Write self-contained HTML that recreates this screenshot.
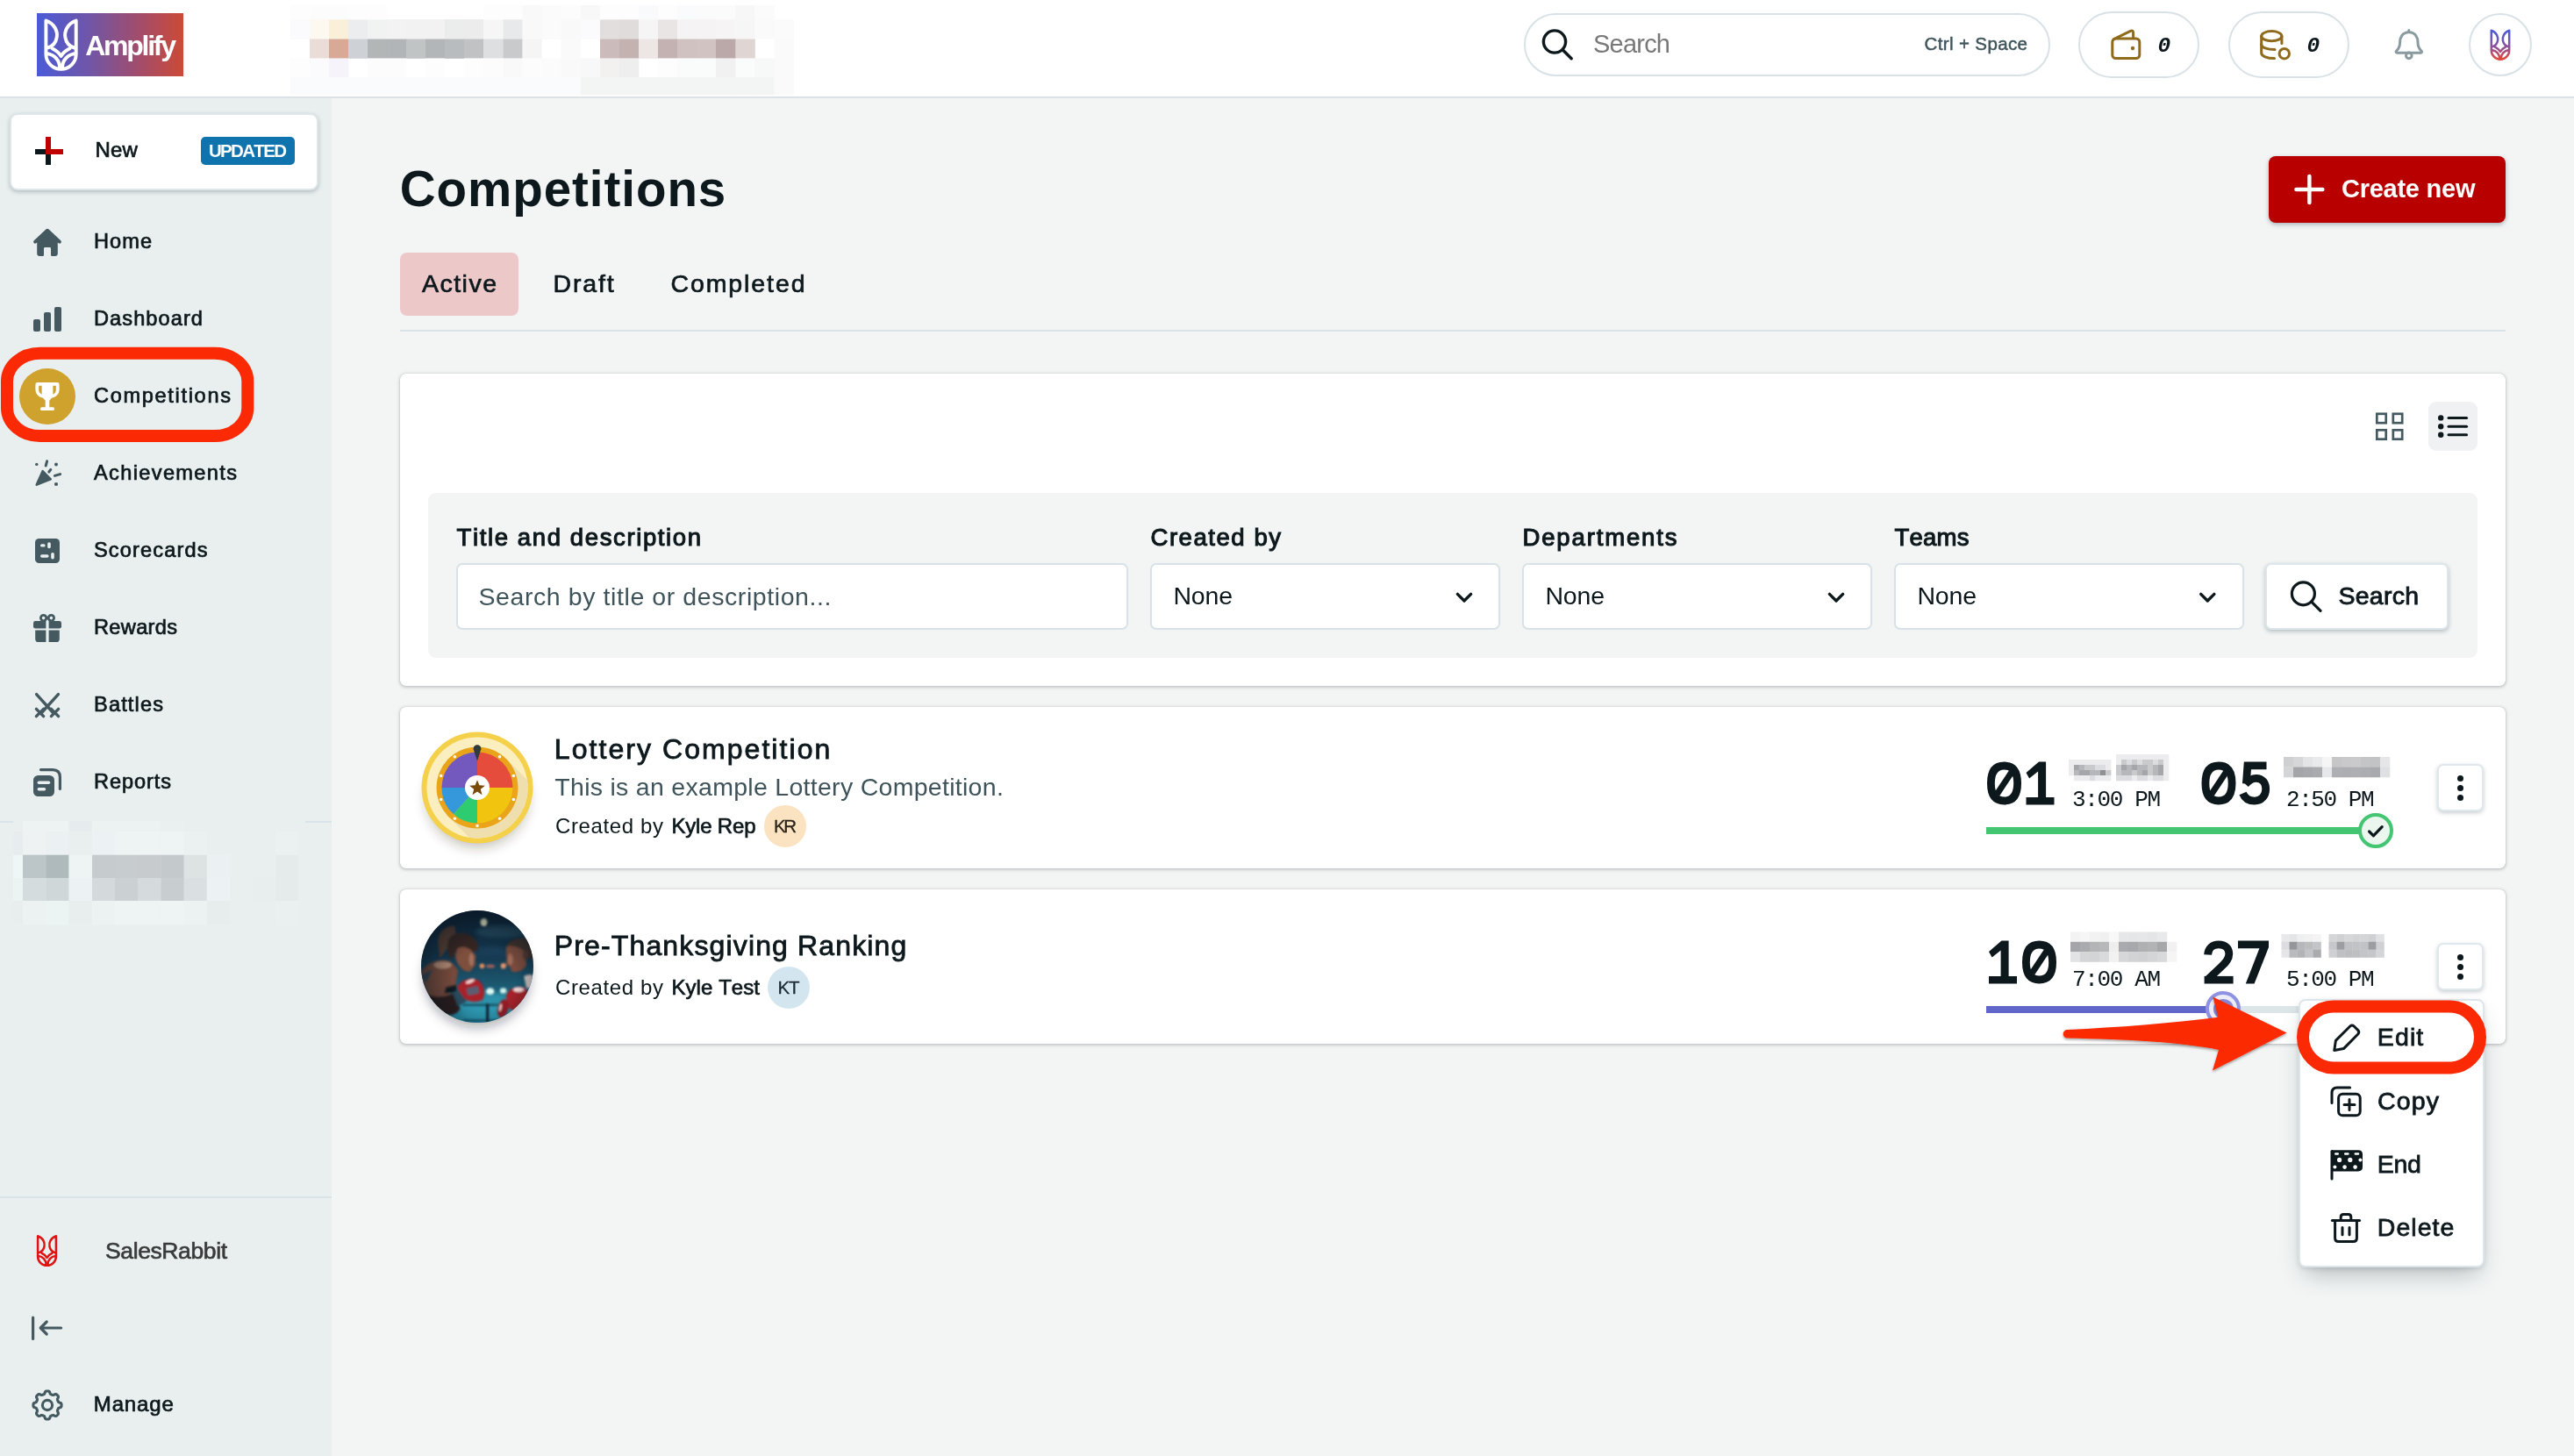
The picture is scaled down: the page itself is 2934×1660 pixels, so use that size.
<!DOCTYPE html>
<html lang="en"><head><meta charset="utf-8"><title>Competitions</title>
<style>
html,body{margin:0;padding:0}
body{width:2934px;height:1660px;background:#f3f5f5;font-family:"Liberation Sans",sans-serif;}
#app div{position:absolute;box-sizing:border-box}
#app{position:relative;width:2934px;height:1660px;overflow:hidden;background:#f3f5f5;will-change:transform}
#app span{position:absolute;white-space:pre;line-height:1;font-kerning:none}
#ov{position:absolute;left:0;top:0;pointer-events:none}
</style></head>
<body><div id="app">
<div style="left:0px;top:112px;width:378px;height:1548px;background:#e9efef;"></div>
<div style="left:0px;top:0px;width:2934px;height:112px;background:#fff;border-bottom:2px solid #dbe3e6;"></div>
<div style="left:42px;top:15px;width:167px;height:72px;background:linear-gradient(90deg,#4a5bd8 0%,#6f56a8 35%,#a04d6e 68%,#cc4a36 100%);"></div>
<div style="left:1737px;top:15px;width:600px;height:72px;background:#fff;border:2px solid #d8e2e6;border-radius:36px;"></div>
<div style="left:2369px;top:13px;width:138px;height:76px;background:#fff;border:2px solid #d8e2e6;border-radius:38px;"></div>
<div style="left:2540px;top:13px;width:138px;height:76px;background:#fff;border:2px solid #d8e2e6;border-radius:38px;"></div>
<div style="left:2814px;top:15px;width:72px;height:72px;background:#fff;border:2px solid #d8e2e6;border-radius:50%;"></div>
<div style="left:10.5px;top:128.5px;width:352px;height:88px;background:#fff;border-radius:9px;border:2px solid #dfe6e9;box-shadow:0 2px 5px rgba(40,60,70,.28);"></div>
<div style="left:229px;top:156px;width:107px;height:32px;background:#0f74ad;border-radius:5px;"></div>
<div style="left:40px;top:170px;width:32px;height:6px;background:#0d181c;"></div>
<div style="left:52px;top:156px;width:6px;height:32px;background:#0d181c;"></div>
<div style="left:52px;top:156px;width:6px;height:20px;background:#c00000;"></div>
<div style="left:52px;top:170px;width:20px;height:6px;background:#c00000;"></div>
<div style="left:22px;top:420px;width:64px;height:64px;background:#cfa22e;border-radius:50%;"></div>
<div style="left:0px;top:936px;width:378px;height:2px;background:#dae3e8;"></div>
<div style="left:0px;top:1364px;width:378px;height:2px;background:#dae3e8;"></div>
<div style="left:2586px;top:178px;width:270px;height:76px;background:#b90000;border-radius:8px;box-shadow:0 2px 5px rgba(30,50,60,.35);"></div>
<div style="left:456px;top:288px;width:135px;height:72px;background:#ecc8c8;border-radius:8px;"></div>
<div style="left:456px;top:376px;width:2400px;height:2px;background:#d9e3e7;"></div>
<div style="left:456px;top:426px;width:2400px;height:356px;background:#fff;border-radius:6.5px;box-shadow:0 1px 4px rgba(30,35,40,.30), 0 0 1px rgba(30,35,40,.25);"></div>
<div style="left:2768px;top:458px;width:56px;height:56px;background:#eff1f2;border-radius:9px;"></div>
<div style="left:488px;top:562px;width:2336px;height:188px;background:#f3f5f5;border-radius:9px;"></div>
<div style="left:520px;top:642px;width:766px;height:76px;background:#fff;border:2px solid #d8e2e6;border-radius:7px;"></div>
<div style="left:1311px;top:642px;width:399px;height:76px;background:#fff;border:2px solid #d8e2e6;border-radius:7px;"></div>
<div style="left:1735px;top:642px;width:399px;height:76px;background:#fff;border:2px solid #d8e2e6;border-radius:7px;"></div>
<div style="left:2159px;top:642px;width:399px;height:76px;background:#fff;border:2px solid #d8e2e6;border-radius:7px;"></div>
<div style="left:2582px;top:642px;width:209px;height:76px;background:#fff;border:2px solid #dde6ea;border-radius:7px;box-shadow:0 2px 5px rgba(40,60,70,.30);"></div>
<div style="left:456px;top:806px;width:2400px;height:184px;background:#fff;border-radius:6.5px;box-shadow:0 1px 4px rgba(30,35,40,.30), 0 0 1px rgba(30,35,40,.25);"></div>
<div style="left:456px;top:1014px;width:2400px;height:176px;background:#fff;border-radius:6.5px;box-shadow:0 1px 4px rgba(30,35,40,.30), 0 0 1px rgba(30,35,40,.25);"></div>
<div style="left:871px;top:918px;width:48px;height:48px;background:#fbe3c1;border-radius:50%;"></div>
<div style="left:875px;top:1102px;width:48px;height:48px;background:#d3e6f0;border-radius:50%;"></div>
<div style="left:2264px;top:943px;width:445px;height:8px;background:#43c572;"></div>
<div style="left:2688px;top:927px;width:40px;height:40px;background:#eaf6ee;border:4px solid #43c572;border-radius:50%;"></div>
<div style="left:2264px;top:1147px;width:445px;height:8px;background:#dce5e8;"></div>
<div style="left:2264px;top:1147px;width:270px;height:8px;background:#6167c9;"></div>
<div style="left:2514px;top:1130px;width:40px;height:40px;background:#ededfa;border:4px solid #8e92e2;border-radius:50%;"></div>
<div style="left:2522.5px;top:1138.5px;width:23px;height:23px;background:#8486d6;border-radius:50%;"></div>
<div style="left:2778px;top:871px;width:53px;height:54px;background:#fff;border:2px solid #dfe8ec;border-radius:7px;box-shadow:0 2px 5px rgba(40,60,70,.25);"></div>
<div style="left:2778px;top:1075px;width:53px;height:54px;background:#fff;border:2px solid #dfe8ec;border-radius:7px;box-shadow:0 2px 5px rgba(40,60,70,.25);"></div>
<div style="left:2801px;top:883.5px;width:7px;height:7px;background:#0d181c;border-radius:50%;"></div>
<div style="left:2801px;top:894.5px;width:7px;height:7px;background:#0d181c;border-radius:50%;"></div>
<div style="left:2801px;top:905.5px;width:7px;height:7px;background:#0d181c;border-radius:50%;"></div>
<div style="left:2801px;top:1087.5px;width:7px;height:7px;background:#0d181c;border-radius:50%;"></div>
<div style="left:2801px;top:1098.5px;width:7px;height:7px;background:#0d181c;border-radius:50%;"></div>
<div style="left:2801px;top:1109.5px;width:7px;height:7px;background:#0d181c;border-radius:50%;"></div>
<div style="left:2620px;top:1138.5px;width:212px;height:306px;background:#fff;border:2px solid #dce6ea;border-radius:8px;box-shadow:0 14px 26px -8px rgba(30,50,60,.32),0 2px 5px rgba(30,50,60,.12);"></div>
<span style='left:97.20px;top:35.76px;font-size:32px;font-family:"Liberation Sans", sans-serif;font-weight:700;color:#fff;letter-spacing:-2.256px;'>Amplify</span>
<span style='left:1816.00px;top:35.50px;font-size:29px;font-family:"Liberation Sans", sans-serif;font-weight:400;color:#787878;letter-spacing:-0.777px;'>Search</span>
<span style='left:2193.50px;top:40.18px;font-size:20.5px;font-family:"Liberation Sans", sans-serif;font-weight:400;color:#3f545a;letter-spacing:0.375px;-webkit-text-stroke:0.5px #3f545a;'>Ctrl + Space</span>
<span style='left:2459.50px;top:40.56px;font-size:24.5px;font-family:"Liberation Mono", monospace;font-weight:700;color:#0d181c;font-style:italic;'>0</span>
<span style='left:2629.50px;top:40.56px;font-size:24.5px;font-family:"Liberation Mono", monospace;font-weight:700;color:#0d181c;font-style:italic;'>0</span>
<span style='left:108.50px;top:158.72px;font-size:24px;font-family:"Liberation Sans", sans-serif;font-weight:400;color:#0d181c;letter-spacing:0.208px;-webkit-text-stroke:0.7px #0d181c;'>New</span>
<span style='left:238.00px;top:161.68px;font-size:20.5px;font-family:"Liberation Sans", sans-serif;font-weight:700;color:#fff;letter-spacing:-1.682px;'>UPDATED</span>
<span style='left:107.00px;top:264.06px;font-size:23.6px;font-family:"Liberation Sans", sans-serif;font-weight:400;color:#0d181c;letter-spacing:1.022px;-webkit-text-stroke:0.7px #0d181c;'>Home</span>
<span style='left:107.00px;top:352.06px;font-size:23.6px;font-family:"Liberation Sans", sans-serif;font-weight:400;color:#0d181c;letter-spacing:1.071px;-webkit-text-stroke:0.7px #0d181c;'>Dashboard</span>
<span style='left:107.00px;top:439.56px;font-size:23.6px;font-family:"Liberation Sans", sans-serif;font-weight:400;color:#0d181c;letter-spacing:1.663px;-webkit-text-stroke:0.7px #0d181c;'>Competitions</span>
<span style='left:107.00px;top:528.06px;font-size:23.6px;font-family:"Liberation Sans", sans-serif;font-weight:400;color:#0d181c;letter-spacing:1.347px;-webkit-text-stroke:0.7px #0d181c;'>Achievements</span>
<span style='left:107.00px;top:616.06px;font-size:23.6px;font-family:"Liberation Sans", sans-serif;font-weight:400;color:#0d181c;letter-spacing:1.128px;-webkit-text-stroke:0.7px #0d181c;'>Scorecards</span>
<span style='left:107.00px;top:704.06px;font-size:23.6px;font-family:"Liberation Sans", sans-serif;font-weight:400;color:#0d181c;letter-spacing:0.315px;-webkit-text-stroke:0.7px #0d181c;'>Rewards</span>
<span style='left:107.00px;top:792.06px;font-size:23.6px;font-family:"Liberation Sans", sans-serif;font-weight:400;color:#0d181c;letter-spacing:1.143px;-webkit-text-stroke:0.7px #0d181c;'>Battles</span>
<span style='left:107.00px;top:880.06px;font-size:23.6px;font-family:"Liberation Sans", sans-serif;font-weight:400;color:#0d181c;letter-spacing:0.896px;-webkit-text-stroke:0.7px #0d181c;'>Reports</span>
<span style='left:120.00px;top:1413.01px;font-size:26.5px;font-family:"Liberation Sans", sans-serif;font-weight:400;color:#3a3a3a;letter-spacing:-0.390px;-webkit-text-stroke:0.65px #3a3a3a;'>SalesRabbit</span>
<span style='left:106.80px;top:1589.22px;font-size:24px;font-family:"Liberation Sans", sans-serif;font-weight:400;color:#0d181c;letter-spacing:0.854px;-webkit-text-stroke:0.7px #0d181c;'>Manage</span>
<span style='left:455.80px;top:187.76px;font-size:56.5px;font-family:"Liberation Sans", sans-serif;font-weight:700;color:#0d181c;letter-spacing:0.958px;'>Competitions</span>
<span style='left:481.00px;top:308.92px;font-size:28.5px;font-family:"Liberation Sans", sans-serif;font-weight:400;color:#0d181c;letter-spacing:1.476px;-webkit-text-stroke:0.7px #0d181c;'>Active</span>
<span style='left:630.60px;top:308.92px;font-size:28.5px;font-family:"Liberation Sans", sans-serif;font-weight:400;color:#0d181c;letter-spacing:1.807px;-webkit-text-stroke:0.7px #0d181c;'>Draft</span>
<span style='left:764.50px;top:308.92px;font-size:28.5px;font-family:"Liberation Sans", sans-serif;font-weight:400;color:#0d181c;letter-spacing:1.897px;-webkit-text-stroke:0.7px #0d181c;'>Completed</span>
<span style='left:2669.00px;top:200.50px;font-size:29px;font-family:"Liberation Sans", sans-serif;font-weight:700;color:#fff;letter-spacing:-0.255px;'>Create new</span>
<span style='left:520.50px;top:599.26px;font-size:27.5px;font-family:"Liberation Sans", sans-serif;font-weight:400;color:#0d181c;letter-spacing:1.620px;-webkit-text-stroke:1.1px #0d181c;'>Title and description</span>
<span style='left:1311.50px;top:599.26px;font-size:27.5px;font-family:"Liberation Sans", sans-serif;font-weight:400;color:#0d181c;letter-spacing:1.552px;-webkit-text-stroke:1.1px #0d181c;'>Created by</span>
<span style='left:1735.50px;top:599.26px;font-size:27.5px;font-family:"Liberation Sans", sans-serif;font-weight:400;color:#0d181c;letter-spacing:1.856px;-webkit-text-stroke:1.1px #0d181c;'>Departments</span>
<span style='left:2159.50px;top:599.26px;font-size:27.5px;font-family:"Liberation Sans", sans-serif;font-weight:400;color:#0d181c;letter-spacing:0.238px;-webkit-text-stroke:1.1px #0d181c;'>Teams</span>
<span style='left:545.50px;top:665.92px;font-size:28.5px;font-family:"Liberation Sans", sans-serif;font-weight:400;color:#3f545a;letter-spacing:0.582px;'>Search by title or description...</span>
<span style='left:1337.50px;top:665.42px;font-size:28.5px;font-family:"Liberation Sans", sans-serif;font-weight:400;color:#0d181c;letter-spacing:-0.212px;'>None</span>
<span style='left:1761.50px;top:665.42px;font-size:28.5px;font-family:"Liberation Sans", sans-serif;font-weight:400;color:#0d181c;letter-spacing:-0.212px;'>None</span>
<span style='left:2185.50px;top:665.42px;font-size:28.5px;font-family:"Liberation Sans", sans-serif;font-weight:400;color:#0d181c;letter-spacing:-0.212px;'>None</span>
<span style='left:2665.50px;top:664.92px;font-size:28.5px;font-family:"Liberation Sans", sans-serif;font-weight:400;color:#0d181c;letter-spacing:0.238px;-webkit-text-stroke:0.9px #0d181c;'>Search</span>
<span style='left:631.80px;top:837.96px;font-size:32px;font-family:"Liberation Sans", sans-serif;font-weight:400;color:#0d181c;letter-spacing:2.058px;-webkit-text-stroke:0.85px #0d181c;'>Lottery Competition</span>
<span style='left:632.30px;top:883.42px;font-size:28.5px;font-family:"Liberation Sans", sans-serif;font-weight:400;color:#3f545a;letter-spacing:0.288px;'>This is an example Lottery Competition.</span>
<span style='left:633.00px;top:929.72px;font-size:24px;font-family:"Liberation Sans", sans-serif;font-weight:400;color:#0d181c;letter-spacing:0.622px;'>Created by</span>
<span style='left:765.50px;top:929.72px;font-size:24px;font-family:"Liberation Sans", sans-serif;font-weight:400;color:#0d181c;letter-spacing:-0.198px;-webkit-text-stroke:0.7px #0d181c;'>Kyle Rep</span>
<span style='left:882.00px;top:932.18px;font-size:20.5px;font-family:"Liberation Sans", sans-serif;font-weight:400;color:#2a2418;letter-spacing:-2.481px;-webkit-text-stroke:0.3px #2a2418;'>KR</span>
<span style='left:631.80px;top:1061.96px;font-size:32px;font-family:"Liberation Sans", sans-serif;font-weight:400;color:#0d181c;letter-spacing:1.139px;-webkit-text-stroke:0.85px #0d181c;'>Pre-Thanksgiving Ranking</span>
<span style='left:633.00px;top:1113.72px;font-size:24px;font-family:"Liberation Sans", sans-serif;font-weight:400;color:#0d181c;letter-spacing:0.622px;'>Created by</span>
<span style='left:765.50px;top:1113.72px;font-size:24px;font-family:"Liberation Sans", sans-serif;font-weight:400;color:#0d181c;letter-spacing:0.058px;-webkit-text-stroke:0.7px #0d181c;'>Kyle Test</span>
<span style='left:886.50px;top:1116.18px;font-size:20.5px;font-family:"Liberation Sans", sans-serif;font-weight:400;color:#1c2a32;letter-spacing:-1.206px;-webkit-text-stroke:0.3px #1c2a32;'>KT</span>
<span style='left:2362.00px;top:899.11px;font-size:26px;font-family:"Liberation Mono", monospace;font-weight:400;color:#0d181c;letter-spacing:-1.369px;'>3:00 PM</span>
<span style='left:2606.00px;top:899.11px;font-size:26px;font-family:"Liberation Mono", monospace;font-weight:400;color:#0d181c;letter-spacing:-1.453px;'>2:50 PM</span>
<span style='left:2362.00px;top:1103.61px;font-size:26px;font-family:"Liberation Mono", monospace;font-weight:400;color:#0d181c;letter-spacing:-1.369px;'>7:00 AM</span>
<span style='left:2606.00px;top:1103.61px;font-size:26px;font-family:"Liberation Mono", monospace;font-weight:400;color:#0d181c;letter-spacing:-1.453px;'>5:00 PM</span>
<span style='left:2709.80px;top:1168.42px;font-size:28.5px;font-family:"Liberation Sans", sans-serif;font-weight:400;color:#0d181c;letter-spacing:1.123px;-webkit-text-stroke:0.8px #0d181c;'>Edit</span>
<span style='left:2710.00px;top:1240.92px;font-size:28.5px;font-family:"Liberation Sans", sans-serif;font-weight:400;color:#0d181c;letter-spacing:1.151px;-webkit-text-stroke:0.8px #0d181c;'>Copy</span>
<span style='left:2709.80px;top:1312.92px;font-size:28.5px;font-family:"Liberation Sans", sans-serif;font-weight:400;color:#0d181c;letter-spacing:-0.357px;-webkit-text-stroke:0.8px #0d181c;'>End</span>
<span style='left:2709.80px;top:1384.92px;font-size:28.5px;font-family:"Liberation Sans", sans-serif;font-weight:400;color:#0d181c;letter-spacing:1.023px;-webkit-text-stroke:0.8px #0d181c;'>Delete</span>
<svg id="ov" width="2934" height="1660" viewBox="0 0 2934 1660">
<defs><linearGradient id="lg1" x1="0" y1="0" x2="0" y2="1"><stop offset="0" stop-color="#4a5bd8"/><stop offset=".55" stop-color="#8a52a0"/><stop offset="1" stop-color="#e2483a"/></linearGradient></defs>
<path d="M52.40 23.60 L52.40 61.74 A17.15 17.15 0 0 0 86.70 61.74 L86.70 23.60 M52.40 23.60 C62.55 26.76 66.05 36.57 64.65 42.84 C63.62 49.15 59.05 53.34 53.43 54.98 M86.70 23.60 C76.55 26.76 73.05 36.57 74.45 42.84 C75.48 49.15 80.05 53.34 85.67 54.98 M53.43 60.82 C62.35 62.36 68.35 69.22 67.90 77.11 M85.67 60.82 C76.75 62.36 70.75 69.22 71.20 77.11 M59.60 55.33 C63.96 57.56 67.46 60.64 69.55 64.07 C71.64 60.64 75.14 57.56 79.50 55.33" fill="none" stroke="#fff" stroke-width="3.9" stroke-linecap="round" stroke-linejoin="round"/>
<path d="M2839.80 34.80 L2839.80 57.48 A10.20 10.20 0 0 0 2860.20 57.48 L2860.20 34.80 M2839.80 34.80 C2845.84 36.68 2847.92 42.51 2847.08 46.24 C2846.47 50.00 2843.76 52.49 2840.41 53.47 M2860.20 34.80 C2854.16 36.68 2852.08 42.51 2852.92 46.24 C2853.53 50.00 2856.24 52.49 2859.59 53.47 M2840.41 56.93 C2845.72 57.85 2849.29 61.93 2849.02 66.62 M2859.59 56.93 C2854.28 57.85 2850.71 61.93 2850.98 66.62 M2844.08 53.67 C2846.67 55.00 2848.76 56.83 2850.00 58.87 C2851.24 56.83 2853.33 55.00 2855.92 53.67" fill="none" stroke="url(#lg1)" stroke-width="2.5" stroke-linecap="round" stroke-linejoin="round"/>
<path d="M43.10 1409.30 L43.10 1432.43 A10.40 10.40 0 0 0 63.90 1432.43 L63.90 1409.30 M43.10 1409.30 C49.26 1411.21 51.38 1417.16 50.53 1420.97 C49.90 1424.80 47.14 1427.33 43.72 1428.33 M63.90 1409.30 C57.74 1411.21 55.62 1417.16 56.47 1420.97 C57.10 1424.80 59.86 1427.33 63.28 1428.33 M43.72 1431.87 C49.13 1432.80 52.77 1436.96 52.50 1441.75 M63.28 1431.87 C57.87 1432.80 54.23 1436.96 54.50 1441.75 M47.47 1428.54 C50.11 1429.89 52.23 1431.76 53.50 1433.84 C54.77 1431.76 56.89 1429.89 59.53 1428.54" fill="none" stroke="#e01313" stroke-width="2.5" stroke-linecap="round" stroke-linejoin="round"/>
<g fill="none" stroke="#0d181c" stroke-width="3.4" stroke-linecap="round"><circle cx="1772" cy="47.5" r="12.6"/><path d="M1781.2 56.8 L1791.2 66.8"/></g>
<g fill="none" stroke="#8f6a1c" stroke-width="3" stroke-linejoin="round" stroke-linecap="round"><rect x="2407.8" y="44" width="31" height="22.5" rx="4"/><path d="M2409.5 44.6 L2428.5 35.4 Q2431.6 34.2 2431.6 37.4 V43.5"/></g><circle cx="2431" cy="55" r="2.2" fill="#8f6a1c"/>
<g fill="none" stroke="#8f6a1c" stroke-width="3" stroke-linecap="round"><ellipse cx="2589.3" cy="41.2" rx="11.6" ry="5.6"/><path d="M2577.7 41.2 V60.5 C2577.7 64 2584 66.6 2592.5 66.6"/><path d="M2577.7 50.8 C2577.7 54 2584 56.6 2593 56.6"/><path d="M2600.9 41.2 V49.5"/><circle cx="2603.8" cy="61.2" r="5.7"/></g>
<g fill="none" stroke="#8a9b9f" stroke-width="3" stroke-linecap="round" stroke-linejoin="round"><path d="M2745.8 34.6 V36.6 M2745.8 36.8 C2738 36.8 2735.6 43.4 2735.6 48.2 C2735.6 53 2733.4 56.4 2731.6 58 C2730.6 59 2731 60.2 2732.6 60.2 H2759 C2760.6 60.2 2761 59 2760 58 C2758.2 56.4 2756 53 2756 48.2 C2756 43.4 2753.6 36.8 2745.8 36.8 Z"/><circle cx="2745.8" cy="63.4" r="3.3"/></g>
<path fill="#455a60" d="M52.6 261.3 Q54 260 55.4 261.3 L69.3 274.3 Q70.6 275.8 69.4 277.1 Q68.2 278.2 66.8 277.2 L65.8 276.4 V289 Q65.8 292 62.8 292 H59.2 Q58 292 58 290.8 V283.4 Q58 282 56.6 282 H51.4 Q50 282 50 283.4 V290.8 Q50 292 48.8 292 H45.2 Q42.2 292 42.2 289 V276.4 L41.2 277.2 Q39.8 278.2 38.6 277.1 Q37.4 275.8 38.7 274.3 Z"/>
<g fill="#455a60"><rect x="38" y="364" width="8" height="14" rx="2"/><rect x="50" y="356" width="8" height="22" rx="2"/><rect x="62" y="350" width="8" height="28" rx="2"/></g>
<g fill="#fff"><path d="M40.4 438.4 Q40.4 436 42.8 436 H65.2 Q67.6 436 67.6 438.4 V444 C67.6 450 63 453 59 453.7 C57.6 455.4 56.6 456.2 56.2 456.8 H51.8 C51.4 456.2 50.4 455.4 49 453.7 C45 453 40.4 450 40.4 444 Z"/><rect x="51.7" y="455" width="4.6" height="10.4"/><rect x="46" y="464.2" width="16" height="3.9" rx="1.7"/></g><g fill="#cfa22e"><path d="M44.2 439.8 H47.6 V449.7 C45.6 448.8 44.2 447 44.2 444.6 Z"/><path d="M60.4 439.8 H63.8 V444.6 C63.8 447 62.4 448.8 60.4 449.7 Z"/></g>
<path fill="#455a60" d="M47.6 536.6 Q48.6 535.2 49.8 536.4 L58.6 545.4 Q59.8 546.8 58.2 547.6 L42.4 553.8 Q39.8 554.6 40.6 552 Z"/><g stroke="#455a60" stroke-width="3" stroke-linecap="round"><path d="M53.6 525.8 L52.2 531"/><path d="M57.8 535.4 L55.8 538"/><path d="M68.6 540.6 L62.4 542.4"/></g><g fill="#455a60"><circle cx="41.8" cy="529.4" r="1.7"/><circle cx="64" cy="529.6" r="2"/><circle cx="64" cy="552" r="2.1"/></g>
<rect x="40" y="614" width="28" height="28" rx="4.5" fill="#455a60"/><g fill="#e9efef"><rect x="46" y="620.2" width="5.6" height="3.4" rx="1.7"/><rect x="54.2" y="618.2" width="3.6" height="7" rx="1.8"/><rect x="46" y="632.2" width="9.6" height="3.6" rx="1.8"/><rect x="58.2" y="630" width="3.6" height="7.6" rx="1.8"/></g>
<g fill="#455a60"><rect x="38" y="708" width="32" height="8.6" rx="2.4"/><path d="M40.2 718.6 H67.8 V728.4 Q67.8 732 64.2 732 H43.8 Q40.2 732 40.2 728.4 Z"/></g><rect x="52.4" y="708" width="3.2" height="24" fill="#e9efef"/><g fill="none" stroke="#455a60" stroke-width="2.8"><circle cx="49.6" cy="704.6" r="3.2"/><circle cx="58.4" cy="704.6" r="3.2"/></g>
<g stroke="#455a60" stroke-width="3.4" stroke-linecap="round" fill="none"><path d="M41.6 791.6 L60.5 812.5"/><path d="M66.4 791.6 L47.5 812.5"/><path d="M41.4 808.4 L49.6 816.6 M49.6 808.4 L41.4 816.6"/><path d="M58.4 808.4 L66.6 816.6 M66.6 808.4 L58.4 816.6"/></g>
<rect x="38" y="884" width="24" height="24" rx="5.5" fill="#455a60"/><g fill="#e9efef"><rect x="42.6" y="890.6" width="14.6" height="3.4" rx="1.7"/><rect x="42.6" y="898" width="9.6" height="3.4" rx="1.7"/></g><path d="M46.5 877.6 H60 Q68.4 877.6 68.4 886 V899.5" fill="none" stroke="#455a60" stroke-width="3.2" stroke-linecap="round"/>
<g stroke="#455a60" stroke-width="3.2" stroke-linecap="round" stroke-linejoin="round" fill="none"><path d="M37.6 1502 V1526.4"/><path d="M69.6 1514 H46.4 M53.2 1507 L46.2 1514 L53.2 1521"/></g>
<path d="M54.00 1585.94 L54.53 1585.95 L55.05 1586.00 L55.56 1586.11 L56.06 1586.35 L56.50 1586.88 L56.83 1587.78 L57.11 1588.68 L57.42 1589.23 L57.78 1589.52 L58.17 1589.72 L58.56 1589.88 L58.95 1590.05 L59.34 1590.21 L59.74 1590.37 L60.15 1590.50 L60.61 1590.55 L61.22 1590.39 L62.06 1589.94 L62.93 1589.54 L63.61 1589.48 L64.13 1589.66 L64.57 1589.95 L64.98 1590.28 L65.36 1590.64 L65.72 1591.02 L66.05 1591.43 L66.34 1591.87 L66.52 1592.39 L66.46 1593.07 L66.06 1593.94 L65.61 1594.78 L65.45 1595.39 L65.50 1595.85 L65.63 1596.26 L65.79 1596.66 L65.95 1597.05 L66.12 1597.44 L66.28 1597.83 L66.48 1598.22 L66.77 1598.58 L67.32 1598.89 L68.22 1599.17 L69.12 1599.50 L69.65 1599.94 L69.89 1600.44 L70.00 1600.95 L70.05 1601.47 L70.06 1602.00 L70.05 1602.53 L70.00 1603.05 L69.89 1603.56 L69.65 1604.06 L69.12 1604.50 L68.22 1604.83 L67.32 1605.11 L66.77 1605.42 L66.48 1605.78 L66.28 1606.17 L66.12 1606.56 L65.95 1606.95 L65.79 1607.34 L65.63 1607.74 L65.50 1608.15 L65.45 1608.61 L65.61 1609.22 L66.06 1610.06 L66.46 1610.93 L66.52 1611.61 L66.34 1612.13 L66.05 1612.57 L65.72 1612.98 L65.36 1613.36 L64.98 1613.72 L64.57 1614.05 L64.13 1614.34 L63.61 1614.52 L62.93 1614.46 L62.06 1614.06 L61.22 1613.61 L60.61 1613.45 L60.15 1613.50 L59.74 1613.63 L59.34 1613.79 L58.95 1613.95 L58.56 1614.12 L58.17 1614.28 L57.78 1614.48 L57.42 1614.77 L57.11 1615.32 L56.83 1616.22 L56.50 1617.12 L56.06 1617.65 L55.56 1617.89 L55.05 1618.00 L54.53 1618.05 L54.00 1618.06 L53.47 1618.05 L52.95 1618.00 L52.44 1617.89 L51.94 1617.65 L51.50 1617.12 L51.17 1616.22 L50.89 1615.32 L50.58 1614.77 L50.22 1614.48 L49.83 1614.28 L49.44 1614.12 L49.05 1613.95 L48.66 1613.79 L48.26 1613.63 L47.85 1613.50 L47.39 1613.45 L46.78 1613.61 L45.94 1614.06 L45.07 1614.46 L44.39 1614.52 L43.87 1614.34 L43.43 1614.05 L43.02 1613.72 L42.64 1613.36 L42.28 1612.98 L41.95 1612.57 L41.66 1612.13 L41.48 1611.61 L41.54 1610.93 L41.94 1610.06 L42.39 1609.22 L42.55 1608.61 L42.50 1608.15 L42.37 1607.74 L42.21 1607.34 L42.05 1606.95 L41.88 1606.56 L41.72 1606.17 L41.52 1605.78 L41.23 1605.42 L40.68 1605.11 L39.78 1604.83 L38.88 1604.50 L38.35 1604.06 L38.11 1603.56 L38.00 1603.05 L37.95 1602.53 L37.94 1602.00 L37.95 1601.47 L38.00 1600.95 L38.11 1600.44 L38.35 1599.94 L38.88 1599.50 L39.78 1599.17 L40.68 1598.89 L41.23 1598.58 L41.52 1598.22 L41.72 1597.83 L41.88 1597.44 L42.05 1597.05 L42.21 1596.66 L42.37 1596.26 L42.50 1595.85 L42.55 1595.39 L42.39 1594.78 L41.94 1593.94 L41.54 1593.07 L41.48 1592.39 L41.66 1591.87 L41.95 1591.43 L42.28 1591.02 L42.64 1590.64 L43.02 1590.28 L43.43 1589.95 L43.87 1589.66 L44.39 1589.48 L45.07 1589.54 L45.94 1589.94 L46.78 1590.39 L47.39 1590.55 L47.85 1590.50 L48.26 1590.37 L48.66 1590.21 L49.05 1590.05 L49.44 1589.88 L49.83 1589.72 L50.22 1589.52 L50.58 1589.23 L50.89 1588.68 L51.17 1587.78 L51.50 1586.88 L51.94 1586.35 L52.44 1586.11 L52.95 1586.00 L53.47 1585.95 Z" fill="none" stroke="#455a60" stroke-width="3.1" stroke-linejoin="round"/><circle cx="54" cy="1602" r="5.6" fill="none" stroke="#455a60" stroke-width="3.1"/>
<path d="M2617.4 216 H2647.4 M2632.4 201 V231" stroke="#fff" stroke-width="4.4" stroke-linecap="round"/>
<g fill="none" stroke="#455a60" stroke-width="2.7"><rect x="2709.3" y="471.8" width="10.4" height="10.4"/><rect x="2709.3" y="490.3" width="10.4" height="10.4"/><rect x="2727.8" y="471.8" width="10.4" height="10.4"/><rect x="2727.8" y="490.3" width="10.4" height="10.4"/></g>
<circle cx="2782.2" cy="476.4" r="3.2" fill="#0d181c"/><path d="M2791 476.4 H2811.6" stroke="#0d181c" stroke-width="3" stroke-linecap="round"/><circle cx="2782.2" cy="486.2" r="3.2" fill="#0d181c"/><path d="M2791 486.2 H2811.6" stroke="#0d181c" stroke-width="3" stroke-linecap="round"/><circle cx="2782.2" cy="495.8" r="3.2" fill="#0d181c"/><path d="M2791 495.8 H2811.6" stroke="#0d181c" stroke-width="3" stroke-linecap="round"/>
<path d="M1661.4 677.4 L1669 685 L1676.6 677.4" fill="none" stroke="#0d181c" stroke-width="3.4" stroke-linecap="round" stroke-linejoin="round"/>
<path d="M2085.4 677.4 L2093 685 L2100.6 677.4" fill="none" stroke="#0d181c" stroke-width="3.4" stroke-linecap="round" stroke-linejoin="round"/>
<path d="M2508.7000000000003 677.4 L2516.3 685 L2523.9 677.4" fill="none" stroke="#0d181c" stroke-width="3.4" stroke-linecap="round" stroke-linejoin="round"/>
<g fill="none" stroke="#0d181c" stroke-width="3.2" stroke-linecap="round"><circle cx="2625.4" cy="676.8" r="13"/><path d="M2635 686.4 L2645 696.4"/></g>
<path d="M2700.6 948 L2705.4 952.8 L2715.2 942.6" fill="none" stroke="#0d181c" stroke-width="3.2" stroke-linecap="round" stroke-linejoin="round"/>
<path d="M2660.8 1197.4 L2662.4 1186.4 L2678.8 1170 Q2681 1168 2683.2 1170 L2687.8 1174.6 Q2689.8 1176.8 2687.8 1179 L2671.4 1195.6 Z" fill="none" stroke="#0d181c" stroke-width="3" stroke-linejoin="round"/>
<g fill="none" stroke="#0d181c" stroke-width="3" stroke-linecap="round" stroke-linejoin="round"><rect x="2665.6" y="1247.2" width="24.6" height="24.6" rx="4.6"/><path d="M2672 1259.5 H2684 M2678 1253.5 V1265.5"/><path d="M2658 1257.4 V1246 Q2658 1240 2664 1240 H2678.6"/></g>
<path d="M2658 1312.4 V1344" stroke="#0d181c" stroke-width="3" stroke-linecap="round"/><path d="M2658 1311.2 H2688 Q2693 1311.2 2693 1316 V1330.6 Q2693 1335.4 2688 1335.4 H2658 Z" fill="#0d181c"/><g fill="#fff"><circle cx="2666.6" cy="1322.4" r="2.6"/><circle cx="2678.8" cy="1322.4" r="2.6"/><circle cx="2690.4" cy="1322.4" r="2"/><circle cx="2661.4" cy="1330.6" r="2"/><circle cx="2672.6" cy="1330.6" r="2.3"/><circle cx="2684.6" cy="1330.6" r="2.3"/><rect x="2661" y="1314.2" width="5" height="2.6" rx="1.2"/><rect x="2672" y="1314.2" width="5.6" height="2.6" rx="1.2"/><rect x="2683.6" y="1314.2" width="5.6" height="2.6" rx="1.2"/></g>
<g fill="none" stroke="#0d181c" stroke-width="3" stroke-linecap="round" stroke-linejoin="round"><path d="M2658.4 1391.6 H2689.6"/><path d="M2668.2 1391 V1387.6 Q2668.2 1384.6 2671.2 1384.6 H2676.8 Q2679.8 1384.6 2679.8 1387.6 V1391"/><path d="M2661.6 1392 V1411.6 Q2661.6 1415.6 2665.6 1415.6 H2682.4 Q2686.4 1415.6 2686.4 1411.6 V1392"/><path d="M2670 1399.4 V1407.8 M2678 1399.4 V1407.8"/></g>
<rect x="8" y="402.7" width="274.3" height="94.4" rx="37.5" ry="32" fill="none" stroke="#fc2905" stroke-width="14"/>
<defs><filter id="ash" x="-10%" y="-20%" width="120%" height="150%"><feDropShadow dx="0" dy="1.6" stdDeviation="1.4" flood-color="#000" flood-opacity=".38"/></filter></defs>
<path filter="url(#ash)" d="M2356.5 1174 C2415 1171.5 2475 1166.5 2528.5 1159.8 L2522.3 1136.6 L2606.5 1177.5 L2522 1220.5 L2529 1197 C2490 1188.5 2422 1185 2356.5 1183.6 A4.8 4.8 0 0 1 2356.5 1174 Z" fill="#fc2905"/>
<rect x="2625" y="1147.5" width="202" height="70" rx="35" fill="none" stroke="#fc2905" stroke-width="14"/>
<rect x="331" y="22" width="22.3" height="22.8" fill="#fbfbfd"/><rect x="353" y="22" width="22.3" height="22.8" fill="#fdf8f0"/><rect x="375" y="22" width="22.3" height="22.8" fill="#faefd9"/><rect x="397" y="22" width="22.3" height="22.8" fill="#ecedee"/><rect x="419" y="22" width="22.3" height="22.8" fill="#f1f2f2"/><rect x="441" y="22" width="22.3" height="22.8" fill="#f2f3f2"/><rect x="463" y="22" width="22.3" height="22.8" fill="#f2f2f2"/><rect x="485" y="22" width="22.3" height="22.8" fill="#f1f2f1"/><rect x="507" y="22" width="22.3" height="22.8" fill="#ebecec"/><rect x="529" y="22" width="22.3" height="22.8" fill="#ececed"/><rect x="551" y="22" width="22.8" height="22.8" fill="#f5f6f5"/><rect x="573.5" y="22" width="22.3" height="22.8" fill="#e8e9ea"/><rect x="595.5" y="22" width="22.3" height="22.8" fill="#f9f9f9"/><rect x="617.5" y="22" width="22.3" height="22.8" fill="#fbfbfc"/><rect x="639.5" y="22" width="22.8" height="22.8" fill="#f9f9f9"/><rect x="662" y="22" width="22.3" height="22.8" fill="#fbfbfd"/><rect x="684" y="22" width="22.3" height="22.8" fill="#e3dede"/><rect x="706" y="22" width="22.3" height="22.8" fill="#e1dcdc"/><rect x="728" y="22" width="22.3" height="22.8" fill="#f5f5f5"/><rect x="750" y="22" width="22.3" height="22.8" fill="#e9e5e5"/><rect x="772" y="22" width="22.3" height="22.8" fill="#f5f3f3"/><rect x="794" y="22" width="22.3" height="22.8" fill="#f6f3f4"/><rect x="816" y="22" width="22.8" height="22.8" fill="#f6f4f5"/><rect x="838.5" y="22" width="22.3" height="22.8" fill="#f7f6f6"/><rect x="860.5" y="22" width="22.3" height="22.8" fill="#fafafa"/><rect x="882.5" y="22" width="22.3" height="22.8" fill="#fbfbfb"/><rect x="353" y="44.5" width="22.3" height="22.3" fill="#eadcd6"/><rect x="375" y="44.5" width="22.3" height="22.3" fill="#d8a994"/><rect x="397" y="44.5" width="22.3" height="22.3" fill="#ced2d6"/><rect x="419" y="44.5" width="22.3" height="22.3" fill="#b2b6b7"/><rect x="441" y="44.5" width="22.3" height="22.3" fill="#b2b5b7"/><rect x="463" y="44.5" width="22.3" height="22.3" fill="#c0c4c5"/><rect x="485" y="44.5" width="22.3" height="22.3" fill="#b3b6b8"/><rect x="507" y="44.5" width="22.3" height="22.3" fill="#b9bcbe"/><rect x="529" y="44.5" width="22.3" height="22.3" fill="#c1c2c4"/><rect x="551" y="44.5" width="22.8" height="22.3" fill="#dedfe0"/><rect x="573.5" y="44.5" width="22.3" height="22.3" fill="#c9cacc"/><rect x="595.5" y="44.5" width="22.3" height="22.3" fill="#f5f5f5"/><rect x="639.5" y="44.5" width="22.8" height="22.3" fill="#f9faf9"/><rect x="684" y="44.5" width="22.3" height="22.3" fill="#cbbcbb"/><rect x="706" y="44.5" width="22.3" height="22.3" fill="#c4b2b1"/><rect x="728" y="44.5" width="22.3" height="22.3" fill="#ede6e5"/><rect x="750" y="44.5" width="22.3" height="22.3" fill="#c3b2b1"/><rect x="772" y="44.5" width="22.3" height="22.3" fill="#cfc2c1"/><rect x="794" y="44.5" width="22.3" height="22.3" fill="#d0c3c2"/><rect x="816" y="44.5" width="22.8" height="22.3" fill="#bba9a9"/><rect x="838.5" y="44.5" width="22.3" height="22.3" fill="#dfd5d3"/><rect x="882.5" y="44.5" width="22.3" height="22.3" fill="#f9faf9"/><rect x="331" y="66.5" width="22.3" height="21.8" fill="#fdfdfd"/><rect x="353" y="66.5" width="22.3" height="21.8" fill="#fbfafc"/><rect x="375" y="66.5" width="22.3" height="21.8" fill="#f6f3fa"/><rect x="419" y="66.5" width="22.3" height="21.8" fill="#fcfcfc"/><rect x="441" y="66.5" width="22.3" height="21.8" fill="#fbfcfb"/><rect x="485" y="66.5" width="22.3" height="21.8" fill="#fdfdfd"/><rect x="529" y="66.5" width="22.3" height="21.8" fill="#fdfdfd"/><rect x="551" y="66.5" width="22.8" height="21.8" fill="#fcfcfc"/><rect x="573.5" y="66.5" width="22.3" height="21.8" fill="#f9f9f9"/><rect x="595.5" y="66.5" width="22.3" height="21.8" fill="#fcfcfc"/><rect x="617.5" y="66.5" width="22.3" height="21.8" fill="#fbfbfc"/><rect x="639.5" y="66.5" width="22.8" height="21.8" fill="#f9f9f9"/><rect x="662" y="66.5" width="22.3" height="21.8" fill="#f7f8f7"/><rect x="684" y="66.5" width="22.3" height="21.8" fill="#f3f0f0"/><rect x="706" y="66.5" width="22.3" height="21.8" fill="#efeeee"/><rect x="750" y="66.5" width="22.3" height="21.8" fill="#fdfdfd"/><rect x="772" y="66.5" width="22.3" height="21.8" fill="#fafbfb"/><rect x="794" y="66.5" width="22.3" height="21.8" fill="#fafbfb"/><rect x="816" y="66.5" width="22.8" height="21.8" fill="#f1f1f1"/><rect x="838.5" y="66.5" width="22.3" height="21.8" fill="#fafbfb"/><rect x="860.5" y="66.5" width="22.3" height="21.8" fill="#f7f8f8"/><rect x="882.5" y="66.5" width="22.3" height="21.8" fill="#fafafa"/><rect x="331" y="88" width="22.3" height="20.3" fill="#fafbfc"/><rect x="353" y="88" width="22.3" height="20.3" fill="#fafbfc"/><rect x="375" y="88" width="22.3" height="20.3" fill="#fafbfc"/><rect x="397" y="88" width="22.3" height="20.3" fill="#fafbfc"/><rect x="419" y="88" width="22.3" height="20.3" fill="#fafbfc"/><rect x="441" y="88" width="22.3" height="20.3" fill="#fafbfc"/><rect x="463" y="88" width="22.3" height="20.3" fill="#fafbfc"/><rect x="485" y="88" width="22.3" height="20.3" fill="#fafbfc"/><rect x="507" y="88" width="22.3" height="20.3" fill="#fafbfc"/><rect x="529" y="88" width="22.3" height="20.3" fill="#fafbfc"/><rect x="551" y="88" width="22.8" height="20.3" fill="#fafbfc"/><rect x="573.5" y="88" width="22.3" height="20.3" fill="#fafbfc"/><rect x="595.5" y="88" width="22.3" height="20.3" fill="#fafbfc"/><rect x="617.5" y="88" width="22.3" height="20.3" fill="#fafbfc"/><rect x="639.5" y="88" width="22.8" height="20.3" fill="#fafbfc"/><rect x="662" y="88" width="22.3" height="20.3" fill="#f3f4f4"/><rect x="684" y="88" width="22.3" height="20.3" fill="#f3f4f4"/><rect x="706" y="88" width="22.3" height="20.3" fill="#f3f4f4"/><rect x="728" y="88" width="22.3" height="20.3" fill="#f3f4f4"/><rect x="750" y="88" width="22.3" height="20.3" fill="#f3f4f4"/><rect x="772" y="88" width="22.3" height="20.3" fill="#f3f4f4"/><rect x="794" y="88" width="22.3" height="20.3" fill="#f3f4f4"/><rect x="816" y="88" width="22.8" height="20.3" fill="#f3f4f4"/><rect x="838.5" y="88" width="22.3" height="20.3" fill="#f3f4f4"/><rect x="860.5" y="88" width="22.3" height="20.3" fill="#f3f4f4"/><rect x="882.5" y="88" width="22.3" height="20.3" fill="#fafafa"/><rect x="331" y="6" width="22.3" height="16.3" fill="#fdfdfd"/><rect x="353" y="6" width="22.3" height="16.3" fill="#fbfcfb"/><rect x="375" y="6" width="22.3" height="16.3" fill="#fbfcfb"/><rect x="397" y="6" width="22.3" height="16.3" fill="#fdfdfd"/><rect x="419" y="6" width="22.3" height="16.3" fill="#fdfdfd"/><rect x="551" y="6" width="22.8" height="16.3" fill="#fdfdfd"/><rect x="573.5" y="6" width="22.3" height="16.3" fill="#fdfdfd"/><rect x="595.5" y="6" width="22.3" height="16.3" fill="#f8f9f8"/><rect x="617.5" y="6" width="22.3" height="16.3" fill="#fbfbfc"/><rect x="639.5" y="6" width="22.8" height="16.3" fill="#fcfcfc"/><rect x="662" y="6" width="22.3" height="16.3" fill="#f7f8f7"/><rect x="684" y="6" width="22.3" height="16.3" fill="#fdfdfd"/><rect x="706" y="6" width="22.3" height="16.3" fill="#fdfdfd"/><rect x="728" y="6" width="22.3" height="16.3" fill="#f9fafc"/><rect x="750" y="6" width="22.3" height="16.3" fill="#fdfdfd"/><rect x="772" y="6" width="22.3" height="16.3" fill="#fafbfc"/><rect x="794" y="6" width="22.3" height="16.3" fill="#fbfbfc"/><rect x="816" y="6" width="22.8" height="16.3" fill="#fbfbfc"/><rect x="838.5" y="6" width="22.3" height="16.3" fill="#f7f7f7"/><rect x="860.5" y="6" width="22.3" height="16.3" fill="#fbfbfb"/>
<rect x="15" y="935" width="333" height="4" fill="#e9efef"/><rect x="26" y="936" width="26.7" height="12.3" fill="#edf3f3"/><rect x="52.4" y="936" width="26.4" height="12.3" fill="#edf3f3"/><rect x="78.5" y="936" width="26.8" height="12.3" fill="#e6ebee"/><rect x="105" y="936" width="26.3" height="12.3" fill="#ecf2f2"/><rect x="131" y="936" width="26.3" height="12.3" fill="#ecf2f2"/><rect x="157" y="936" width="26.8" height="12.3" fill="#ecf2f2"/><rect x="183.5" y="936" width="26.4" height="12.3" fill="#eaf0f0"/><rect x="15" y="948" width="11.3" height="27.0" fill="#e7ecee"/><rect x="26" y="948" width="26.7" height="27.0" fill="#eef2f3"/><rect x="52.4" y="948" width="26.4" height="27.0" fill="#ebf1f2"/><rect x="78.5" y="948" width="26.8" height="27.0" fill="#e9efef"/><rect x="105" y="948" width="26.3" height="27.0" fill="#ecf2f3"/><rect x="131" y="948" width="26.3" height="27.0" fill="#eef3f4"/><rect x="157" y="948" width="26.8" height="27.0" fill="#eef3f4"/><rect x="183.5" y="948" width="26.4" height="27.0" fill="#eef3f4"/><rect x="209.6" y="948" width="26.4" height="27.0" fill="#ebf1f1"/><rect x="314.7" y="948" width="25.6" height="27.0" fill="#ebf0f1"/><rect x="15" y="974.7" width="11.3" height="26.6" fill="#eff6f6"/><rect x="26" y="974.7" width="26.7" height="26.6" fill="#bcc5c8"/><rect x="52.4" y="974.7" width="26.4" height="26.6" fill="#aebabc"/><rect x="78.5" y="974.7" width="26.8" height="26.6" fill="#eef3f4"/><rect x="105" y="974.7" width="26.3" height="26.6" fill="#c6cbce"/><rect x="131" y="974.7" width="26.3" height="26.6" fill="#c7ccce"/><rect x="157" y="974.7" width="26.8" height="26.6" fill="#c7cbce"/><rect x="183.5" y="974.7" width="26.4" height="26.6" fill="#c4c9cc"/><rect x="209.6" y="974.7" width="26.4" height="26.6" fill="#dde3e3"/><rect x="235.7" y="974.7" width="26.6" height="26.6" fill="#ebf1f2"/><rect x="314.7" y="974.7" width="25.6" height="26.6" fill="#e5ebeb"/><rect x="15" y="1001" width="11.3" height="26.3" fill="#ecf3f3"/><rect x="26" y="1001" width="26.7" height="26.3" fill="#d4dcde"/><rect x="52.4" y="1001" width="26.4" height="26.3" fill="#cfd7d9"/><rect x="78.5" y="1001" width="26.8" height="26.3" fill="#ecf2f3"/><rect x="105" y="1001" width="26.3" height="26.3" fill="#d4d9dc"/><rect x="131" y="1001" width="26.3" height="26.3" fill="#cbd0d3"/><rect x="157" y="1001" width="26.8" height="26.3" fill="#d5dadc"/><rect x="183.5" y="1001" width="26.4" height="26.3" fill="#c8cdd0"/><rect x="209.6" y="1001" width="26.4" height="26.3" fill="#dadfe1"/><rect x="235.7" y="1001" width="26.6" height="26.3" fill="#ecf2f3"/><rect x="288" y="1001" width="27.0" height="26.3" fill="#e8eeee"/><rect x="314.7" y="1001" width="25.6" height="26.3" fill="#e5ebeb"/><rect x="15" y="1027" width="11.3" height="27.3" fill="#e8eeee"/><rect x="26" y="1027" width="26.7" height="27.3" fill="#ecf2f2"/><rect x="52.4" y="1027" width="26.4" height="27.3" fill="#ecf3f3"/><rect x="78.5" y="1027" width="26.8" height="27.3" fill="#e8eeee"/><rect x="105" y="1027" width="26.3" height="27.3" fill="#ecf2f2"/><rect x="131" y="1027" width="26.3" height="27.3" fill="#eef4f4"/><rect x="157" y="1027" width="26.8" height="27.3" fill="#eef4f4"/><rect x="183.5" y="1027" width="26.4" height="27.3" fill="#eef4f4"/><rect x="209.6" y="1027" width="26.4" height="27.3" fill="#ecf2f2"/><rect x="235.7" y="1027" width="26.6" height="27.3" fill="#e7eded"/><rect x="314.7" y="1027" width="25.6" height="27.3" fill="#eaf0f0"/>
<rect x="2412.0" y="860.0" width="6.3" height="6.3" fill="#ececee"/><rect x="2418.0" y="860.0" width="6.3" height="6.3" fill="#ececee"/><rect x="2424.0" y="860.0" width="6.3" height="6.3" fill="#ececee"/><rect x="2430.0" y="860.0" width="6.3" height="6.3" fill="#ececee"/><rect x="2436.0" y="860.0" width="6.3" height="6.3" fill="#ececee"/><rect x="2442.0" y="860.0" width="6.3" height="6.3" fill="#ececee"/><rect x="2448.0" y="860.0" width="6.3" height="6.3" fill="#ececee"/><rect x="2454.0" y="860.0" width="6.3" height="6.3" fill="#ececee"/><rect x="2460.0" y="860.0" width="6.3" height="6.3" fill="#ececee"/><rect x="2466.0" y="860.0" width="6.3" height="6.3" fill="#ececee"/><rect x="2358.0" y="866.0" width="6.3" height="6.3" fill="#ececee"/><rect x="2364.0" y="866.0" width="6.3" height="6.3" fill="#ececee"/><rect x="2370.0" y="866.0" width="6.3" height="6.3" fill="#ececee"/><rect x="2376.0" y="866.0" width="6.3" height="6.3" fill="#ececee"/><rect x="2382.0" y="866.0" width="6.3" height="6.3" fill="#ececee"/><rect x="2388.0" y="866.0" width="6.3" height="6.3" fill="#ececee"/><rect x="2394.0" y="866.0" width="6.3" height="6.3" fill="#ececee"/><rect x="2400.0" y="866.0" width="6.3" height="6.3" fill="#ececee"/><rect x="2412.0" y="866.0" width="6.3" height="6.3" fill="#ececee"/><rect x="2418.0" y="866.0" width="6.3" height="6.3" fill="#c9cacc"/><rect x="2424.0" y="866.0" width="6.3" height="6.3" fill="#dcdde0"/><rect x="2430.0" y="866.0" width="6.3" height="6.3" fill="#c9cacc"/><rect x="2436.0" y="866.0" width="6.3" height="6.3" fill="#dcdde0"/><rect x="2442.0" y="866.0" width="6.3" height="6.3" fill="#c9cacc"/><rect x="2448.0" y="866.0" width="6.3" height="6.3" fill="#c9cacc"/><rect x="2454.0" y="866.0" width="6.3" height="6.3" fill="#dcdde0"/><rect x="2460.0" y="866.0" width="6.3" height="6.3" fill="#c9cacc"/><rect x="2466.0" y="866.0" width="6.3" height="6.3" fill="#ececee"/><rect x="2358.0" y="872.0" width="6.3" height="6.3" fill="#ececee"/><rect x="2364.0" y="872.0" width="6.3" height="6.3" fill="#a4a6a9"/><rect x="2370.0" y="872.0" width="6.3" height="6.3" fill="#b6b7ba"/><rect x="2376.0" y="872.0" width="6.3" height="6.3" fill="#c9cacc"/><rect x="2382.0" y="872.0" width="6.3" height="6.3" fill="#c9cacc"/><rect x="2388.0" y="872.0" width="6.3" height="6.3" fill="#dcdde0"/><rect x="2394.0" y="872.0" width="6.3" height="6.3" fill="#dcdde0"/><rect x="2400.0" y="872.0" width="6.3" height="6.3" fill="#ececee"/><rect x="2412.0" y="872.0" width="6.3" height="6.3" fill="#c9cacc"/><rect x="2418.0" y="872.0" width="6.3" height="6.3" fill="#a4a6a9"/><rect x="2424.0" y="872.0" width="6.3" height="6.3" fill="#b6b7ba"/><rect x="2430.0" y="872.0" width="6.3" height="6.3" fill="#a4a6a9"/><rect x="2436.0" y="872.0" width="6.3" height="6.3" fill="#b6b7ba"/><rect x="2442.0" y="872.0" width="6.3" height="6.3" fill="#b6b7ba"/><rect x="2448.0" y="872.0" width="6.3" height="6.3" fill="#c9cacc"/><rect x="2454.0" y="872.0" width="6.3" height="6.3" fill="#b6b7ba"/><rect x="2460.0" y="872.0" width="6.3" height="6.3" fill="#a4a6a9"/><rect x="2466.0" y="872.0" width="6.3" height="6.3" fill="#ececee"/><rect x="2358.0" y="878.0" width="6.3" height="6.3" fill="#ececee"/><rect x="2364.0" y="878.0" width="6.3" height="6.3" fill="#b6b7ba"/><rect x="2370.0" y="878.0" width="6.3" height="6.3" fill="#a4a6a9"/><rect x="2376.0" y="878.0" width="6.3" height="6.3" fill="#a4a6a9"/><rect x="2382.0" y="878.0" width="6.3" height="6.3" fill="#b6b7ba"/><rect x="2388.0" y="878.0" width="6.3" height="6.3" fill="#b6b7ba"/><rect x="2394.0" y="878.0" width="6.3" height="6.3" fill="#8e9093"/><rect x="2400.0" y="878.0" width="6.3" height="6.3" fill="#c9cacc"/><rect x="2412.0" y="878.0" width="6.3" height="6.3" fill="#c9cacc"/><rect x="2418.0" y="878.0" width="6.3" height="6.3" fill="#b6b7ba"/><rect x="2424.0" y="878.0" width="6.3" height="6.3" fill="#b6b7ba"/><rect x="2430.0" y="878.0" width="6.3" height="6.3" fill="#c9cacc"/><rect x="2436.0" y="878.0" width="6.3" height="6.3" fill="#b6b7ba"/><rect x="2442.0" y="878.0" width="6.3" height="6.3" fill="#a4a6a9"/><rect x="2448.0" y="878.0" width="6.3" height="6.3" fill="#c9cacc"/><rect x="2454.0" y="878.0" width="6.3" height="6.3" fill="#b6b7ba"/><rect x="2460.0" y="878.0" width="6.3" height="6.3" fill="#a4a6a9"/><rect x="2466.0" y="878.0" width="6.3" height="6.3" fill="#ececee"/><rect x="2364.0" y="884.0" width="6.3" height="6.3" fill="#ececee"/><rect x="2370.0" y="884.0" width="6.3" height="6.3" fill="#ececee"/><rect x="2376.0" y="884.0" width="6.3" height="6.3" fill="#ececee"/><rect x="2382.0" y="884.0" width="6.3" height="6.3" fill="#dcdde0"/><rect x="2388.0" y="884.0" width="6.3" height="6.3" fill="#ececee"/><rect x="2394.0" y="884.0" width="6.3" height="6.3" fill="#ececee"/><rect x="2400.0" y="884.0" width="6.3" height="6.3" fill="#ececee"/><rect x="2412.0" y="884.0" width="6.3" height="6.3" fill="#dcdde0"/><rect x="2418.0" y="884.0" width="6.3" height="6.3" fill="#dcdde0"/><rect x="2424.0" y="884.0" width="6.3" height="6.3" fill="#dcdde0"/><rect x="2430.0" y="884.0" width="6.3" height="6.3" fill="#ececee"/><rect x="2436.0" y="884.0" width="6.3" height="6.3" fill="#dcdde0"/><rect x="2442.0" y="884.0" width="6.3" height="6.3" fill="#dcdde0"/><rect x="2448.0" y="884.0" width="6.3" height="6.3" fill="#ececee"/><rect x="2454.0" y="884.0" width="6.3" height="6.3" fill="#dcdde0"/><rect x="2460.0" y="884.0" width="6.3" height="6.3" fill="#dcdde0"/><rect x="2466.0" y="884.0" width="6.3" height="6.3" fill="#ececee"/>
<rect x="2603.0" y="863.0" width="11.3" height="11.8" fill="#cfd0d2"/><rect x="2614.0" y="863.0" width="11.3" height="11.8" fill="#d6d7d9"/><rect x="2625.0" y="863.0" width="11.3" height="11.8" fill="#e3e4e6"/><rect x="2636.0" y="863.0" width="11.3" height="11.8" fill="#e9eaeb"/><rect x="2647.0" y="863.0" width="11.3" height="11.8" fill="#f5f5f6"/><rect x="2658.0" y="863.0" width="11.3" height="11.8" fill="#c6c6c9"/><rect x="2669.0" y="863.0" width="11.3" height="11.8" fill="#c9c9cc"/><rect x="2680.0" y="863.0" width="11.3" height="11.8" fill="#cacacd"/><rect x="2691.0" y="863.0" width="11.3" height="11.8" fill="#c4c5c7"/><rect x="2702.0" y="863.0" width="11.3" height="11.8" fill="#c2c3c5"/><rect x="2713.0" y="863.0" width="11.3" height="11.8" fill="#e6e6e9"/><rect x="2603.0" y="874.5" width="11.3" height="11.8" fill="#d4d5d7"/><rect x="2614.0" y="874.5" width="11.3" height="11.8" fill="#a3a5a8"/><rect x="2625.0" y="874.5" width="11.3" height="11.8" fill="#a6a8ab"/><rect x="2636.0" y="874.5" width="11.3" height="11.8" fill="#a9abae"/><rect x="2647.0" y="874.5" width="11.3" height="11.8" fill="#e6e7e9"/><rect x="2658.0" y="874.5" width="11.3" height="11.8" fill="#aeafb2"/><rect x="2669.0" y="874.5" width="11.3" height="11.8" fill="#adaeb1"/><rect x="2680.0" y="874.5" width="11.3" height="11.8" fill="#aeafb2"/><rect x="2691.0" y="874.5" width="11.3" height="11.8" fill="#acadb0"/><rect x="2702.0" y="874.5" width="11.3" height="11.8" fill="#a9aaad"/><rect x="2713.0" y="874.5" width="11.3" height="11.8" fill="#dfe0e3"/>
<rect x="2360.0" y="1062.5" width="11.3" height="11.6" fill="#f3f3f4"/><rect x="2371.0" y="1062.5" width="11.3" height="11.6" fill="#f6f6f7"/><rect x="2382.0" y="1062.5" width="11.3" height="11.6" fill="#f2f2f3"/><rect x="2393.0" y="1062.5" width="11.3" height="11.6" fill="#f0f0f1"/><rect x="2404.0" y="1062.5" width="11.3" height="11.6" fill="#f8f8f8"/><rect x="2415.0" y="1062.5" width="11.3" height="11.6" fill="#e6e7e8"/><rect x="2426.0" y="1062.5" width="11.3" height="11.6" fill="#e5e6e7"/><rect x="2437.0" y="1062.5" width="11.3" height="11.6" fill="#e6e7e8"/><rect x="2448.0" y="1062.5" width="11.3" height="11.6" fill="#e4e5e6"/><rect x="2459.0" y="1062.5" width="11.3" height="11.6" fill="#e8e9ea"/><rect x="2360.0" y="1073.8" width="11.3" height="11.6" fill="#a3a5a8"/><rect x="2371.0" y="1073.8" width="11.3" height="11.6" fill="#a9abae"/><rect x="2382.0" y="1073.8" width="11.3" height="11.6" fill="#b2b4b6"/><rect x="2393.0" y="1073.8" width="11.3" height="11.6" fill="#b6b8ba"/><rect x="2404.0" y="1073.8" width="11.3" height="11.6" fill="#eeeeef"/><rect x="2415.0" y="1073.8" width="11.3" height="11.6" fill="#a8aaad"/><rect x="2426.0" y="1073.8" width="11.3" height="11.6" fill="#a6a8ab"/><rect x="2437.0" y="1073.8" width="11.3" height="11.6" fill="#aeb0b2"/><rect x="2448.0" y="1073.8" width="11.3" height="11.6" fill="#b1b3b5"/><rect x="2459.0" y="1073.8" width="11.3" height="11.6" fill="#a5a7aa"/><rect x="2470.0" y="1073.8" width="11.3" height="11.6" fill="#f1f1f2"/><rect x="2360.0" y="1085.2" width="11.3" height="11.6" fill="#e2e3e4"/><rect x="2371.0" y="1085.2" width="11.3" height="11.6" fill="#d5d6d8"/><rect x="2382.0" y="1085.2" width="11.3" height="11.6" fill="#d3d4d6"/><rect x="2393.0" y="1085.2" width="11.3" height="11.6" fill="#d9dadb"/><rect x="2404.0" y="1085.2" width="11.3" height="11.6" fill="#f1f1f2"/><rect x="2415.0" y="1085.2" width="11.3" height="11.6" fill="#d6d7d9"/><rect x="2426.0" y="1085.2" width="11.3" height="11.6" fill="#d2d3d5"/><rect x="2437.0" y="1085.2" width="11.3" height="11.6" fill="#d0d1d3"/><rect x="2448.0" y="1085.2" width="11.3" height="11.6" fill="#d4d5d7"/><rect x="2459.0" y="1085.2" width="11.3" height="11.6" fill="#d8d9db"/><rect x="2470.0" y="1085.2" width="11.3" height="11.6" fill="#f5f5f6"/>
<rect x="2600.5" y="1065.0" width="9.3" height="9.1" fill="#e9e9eb"/><rect x="2609.5" y="1065.0" width="9.3" height="9.1" fill="#e4e5e7"/><rect x="2618.5" y="1065.0" width="9.3" height="9.1" fill="#eeeff0"/><rect x="2627.5" y="1065.0" width="9.3" height="9.1" fill="#f1f1f2"/><rect x="2636.5" y="1065.0" width="9.3" height="9.1" fill="#f4f4f5"/><rect x="2654.5" y="1065.0" width="9.3" height="9.1" fill="#d5d6d8"/><rect x="2663.5" y="1065.0" width="9.3" height="9.1" fill="#d0d1d3"/><rect x="2672.5" y="1065.0" width="9.3" height="9.1" fill="#d6d7d9"/><rect x="2681.5" y="1065.0" width="9.3" height="9.1" fill="#d3d4d6"/><rect x="2690.5" y="1065.0" width="9.3" height="9.1" fill="#d4d5d7"/><rect x="2699.5" y="1065.0" width="9.3" height="9.1" fill="#d0d1d4"/><rect x="2708.5" y="1065.0" width="9.3" height="9.1" fill="#e0e1e3"/><rect x="2600.5" y="1073.8" width="9.3" height="9.1" fill="#dcdde0"/><rect x="2609.5" y="1073.8" width="9.3" height="9.1" fill="#94969a"/><rect x="2618.5" y="1073.8" width="9.3" height="9.1" fill="#b5b7ba"/><rect x="2627.5" y="1073.8" width="9.3" height="9.1" fill="#bbbdbf"/><rect x="2636.5" y="1073.8" width="9.3" height="9.1" fill="#c3c4c7"/><rect x="2654.5" y="1073.8" width="9.3" height="9.1" fill="#c6c7ca"/><rect x="2663.5" y="1073.8" width="9.3" height="9.1" fill="#9c9ea2"/><rect x="2672.5" y="1073.8" width="9.3" height="9.1" fill="#c0c1c4"/><rect x="2681.5" y="1073.8" width="9.3" height="9.1" fill="#c2c3c6"/><rect x="2690.5" y="1073.8" width="9.3" height="9.1" fill="#c1c2c5"/><rect x="2699.5" y="1073.8" width="9.3" height="9.1" fill="#9b9da1"/><rect x="2708.5" y="1073.8" width="9.3" height="9.1" fill="#d0d1d4"/><rect x="2600.5" y="1082.7" width="9.3" height="9.1" fill="#e6e6e8"/><rect x="2609.5" y="1082.7" width="9.3" height="9.1" fill="#b9babd"/><rect x="2618.5" y="1082.7" width="9.3" height="9.1" fill="#b1b3b6"/><rect x="2627.5" y="1082.7" width="9.3" height="9.1" fill="#c3c4c7"/><rect x="2636.5" y="1082.7" width="9.3" height="9.1" fill="#a9abae"/><rect x="2654.5" y="1082.7" width="9.3" height="9.1" fill="#cfd0d3"/><rect x="2663.5" y="1082.7" width="9.3" height="9.1" fill="#bfc0c3"/><rect x="2672.5" y="1082.7" width="9.3" height="9.1" fill="#bcbdc0"/><rect x="2681.5" y="1082.7" width="9.3" height="9.1" fill="#bdbfc1"/><rect x="2690.5" y="1082.7" width="9.3" height="9.1" fill="#c3c4c7"/><rect x="2699.5" y="1082.7" width="9.3" height="9.1" fill="#c5c6c9"/><rect x="2708.5" y="1082.7" width="9.3" height="9.1" fill="#d4d5d8"/>
<path transform="translate(2265 868.5)" d="M19.5 4.5 C31 4.5 34.6 13 34.6 24.5 C34.6 36 31 44.5 19.5 44.5 C8 44.5 4.4 36 4.4 24.5 C4.4 13 8 4.5 19.5 4.5 Z" fill="none" stroke="#0d181c" stroke-width="8.8"/><path transform="translate(2265 868.5)" d="M11.2 37 L27.8 12" stroke="#0d181c" stroke-width="7" /><path transform="translate(2309.5 868.5)" d="M14.5 0 H22.6 V40.4 H32 V49 H0 V40.4 H13.6 V11 L3.6 19 L0 12.6 Z" fill="#0d181c"/>
<path transform="translate(2509.5 868.5)" d="M19.5 4.5 C31 4.5 34.6 13 34.6 24.5 C34.6 36 31 44.5 19.5 44.5 C8 44.5 4.4 36 4.4 24.5 C4.4 13 8 4.5 19.5 4.5 Z" fill="none" stroke="#0d181c" stroke-width="8.8"/><path transform="translate(2509.5 868.5)" d="M11.2 37 L27.8 12" stroke="#0d181c" stroke-width="7" /><g transform="translate(2552.5 868.5)" fill="none" stroke="#0d181c" stroke-width="8.8"><path d="M31 4.4 H9.4 L7.9 25" stroke-linejoin="miter"/><path d="M7 25.5 C11.5 20.6 15.6 18.8 19 18.8 C26.6 18.8 30.2 24.4 30.2 31 C30.2 39 25 44.6 17.4 44.6 C10.4 44.6 6 41 4 36"/></g>
<path transform="translate(2267 1072.5)" d="M14.5 0 H22.6 V40.4 H32 V49 H0 V40.4 H13.6 V11 L3.6 19 L0 12.6 Z" fill="#0d181c"/><path transform="translate(2305 1072.5)" d="M19.5 4.5 C31 4.5 34.6 13 34.6 24.5 C34.6 36 31 44.5 19.5 44.5 C8 44.5 4.4 36 4.4 24.5 C4.4 13 8 4.5 19.5 4.5 Z" fill="none" stroke="#0d181c" stroke-width="8.8"/><path transform="translate(2305 1072.5)" d="M11.2 37 L27.8 12" stroke="#0d181c" stroke-width="7" />
<path transform="translate(2512 1072.5)" d="M4.6 16 C5 8.6 10 4.4 17 4.4 C24.4 4.4 28.8 8.6 28.8 15 C28.8 20.6 25.6 24.4 20 29.6 L5.4 43.4" fill="none" stroke="#0d181c" stroke-width="8.8"/><rect x="2512.6" y="1112.9" width="33" height="8.6" fill="#0d181c"/><path transform="translate(2551 1072.5)" d="M0 0 H35 V7.6 L18.6 49 H8.8 L24.4 8.8 H0 Z" fill="#0d181c"/>
<defs><clipPath id="wc"><circle cx="544" cy="898" r="57.6"/></clipPath><filter id="sh" x="-30%" y="-30%" width="160%" height="170%"><feGaussianBlur stdDeviation="7"/></filter></defs><ellipse cx="544" cy="910" rx="58" ry="56" fill="rgba(60,50,20,.30)" filter="url(#sh)"/><circle cx="544" cy="898" r="63.5" fill="#f5d04a"/><circle cx="544" cy="898" r="57.6" fill="#fbefc0"/><g clip-path="url(#wc)"><path d="M577 865 L654 942 L588 1008 L511 931 Z" fill="#f0dfae"/></g><circle cx="544" cy="898" r="46.5" fill="#e9a41a"/><path d="M544 898 L544.00 857.50 A40.5 40.5 0 0 1 584.50 898.00 Z" fill="#e64c3c"/><path d="M544 898 L584.50 898.00 A40.5 40.5 0 0 1 544.00 938.50 Z" fill="#f1c40f"/><path d="M544 898 L544.00 938.50 A40.5 40.5 0 0 1 516.90 928.10 Z" fill="#2ecc71"/><path d="M544 898 L516.90 928.10 A40.5 40.5 0 0 1 503.50 898.00 Z" fill="#3498db"/><path d="M544 898 L503.50 898.00 A40.5 40.5 0 0 1 544.00 857.50 Z" fill="#7359bd"/><circle cx="544.00" cy="941.50" r="1.8" fill="#fff"/><circle cx="518.43" cy="933.19" r="1.8" fill="#fff"/><circle cx="502.63" cy="911.44" r="1.8" fill="#fff"/><circle cx="502.63" cy="884.56" r="1.8" fill="#fff"/><circle cx="518.43" cy="862.81" r="1.8" fill="#fff"/><circle cx="569.57" cy="862.81" r="1.8" fill="#fff"/><circle cx="585.37" cy="884.56" r="1.8" fill="#fff"/><circle cx="585.37" cy="911.44" r="1.8" fill="#fff"/><circle cx="569.57" cy="933.19" r="1.8" fill="#fff"/><circle cx="544" cy="898" r="14" fill="#fff"/><polygon points="544.00,889.20 546.35,895.36 552.94,895.70 547.80,899.84 549.53,906.20 544.00,902.60 538.47,906.20 540.20,899.84 535.06,895.70 541.65,895.36" fill="#7a4a06"/><path d="M544 867.5 L539.6 854 C539.4 847.6 548.6 847.6 548.4 854 Z" fill="#333a3c"/>
<defs><clipPath id="pc"><circle cx="544" cy="1102" r="64"/></clipPath><linearGradient id="pbg" x1="0" y1="0" x2="0" y2="1"><stop offset="0" stop-color="#0e2134"/><stop offset=".42" stop-color="#163a50"/><stop offset=".66" stop-color="#1c5a72"/><stop offset=".85" stop-color="#2a8aa4"/><stop offset="1" stop-color="#2a93ad"/></linearGradient><radialGradient id="pvg" cx="0.56" cy="0.6" r="0.62"><stop offset=".45" stop-color="#081420" stop-opacity="0"/><stop offset="1" stop-color="#081420" stop-opacity=".6"/></radialGradient><filter id="pb" x="-20%" y="-20%" width="140%" height="140%"><feGaussianBlur stdDeviation="9"/></filter><filter id="pb2" x="-60%" y="-60%" width="220%" height="220%"><feGaussianBlur stdDeviation="22"/></filter></defs><ellipse cx="544" cy="1114" rx="60" ry="57" fill="rgba(20,30,40,.38)" filter="url(#sh)"/><g clip-path="url(#pc)"><g transform="translate(544 1102) scale(0.10302) translate(-719 -718)"><rect x="60" y="60" width="1320" height="1320" fill="url(#pbg)"/><g filter="url(#pb2)"><ellipse cx="1000" cy="330" rx="300" ry="70" fill="#2d5b70" opacity=".55"/><ellipse cx="860" cy="1180" rx="330" ry="170" fill="#2f9bb4" opacity=".7"/><ellipse cx="900" cy="560" rx="260" ry="60" fill="#1d3f58" opacity=".8"/></g><g filter="url(#pb)"><ellipse cx="792" cy="228" rx="38" ry="44" fill="#f1eec9"/><circle cx="772" cy="712" r="27" fill="#e08c62"/><ellipse cx="865" cy="714" rx="50" ry="20" fill="#b9665a" opacity=".8"/><circle cx="1008" cy="710" r="30" fill="#e6946a"/><ellipse cx="862" cy="992" rx="46" ry="38" fill="#dcf8f2"/><ellipse cx="1006" cy="986" rx="36" ry="32" fill="#cff3ee"/><path d="M560 1142 H965" stroke="#0c1c2a" stroke-width="14"/><path d="M832 1130 V1340" stroke="#0c1c2a" stroke-width="28"/><path d="M560 1314 H1120" stroke="#0d2436" stroke-width="12"/><path d="M470 268 C380 258 262 330 288 480 C298 560 296 600 310 622 C360 560 400 470 486 420 Z" fill="#5c4032"/><path d="M396 440 C420 338 560 318 652 378 C722 428 742 482 722 542 L640 562 C600 522 540 500 500 522 C470 560 460 600 440 640 C400 600 376 520 396 440 Z" fill="#382823"/><path d="M496 524 C540 482 620 500 662 552 L706 600 C700 640 690 664 702 690 C690 722 662 742 640 772 C600 782 560 762 530 722 C500 682 470 640 480 580 Z" fill="#7e4f3e"/><ellipse cx="654" cy="640" rx="26" ry="72" fill="#c4907c" opacity=".55"/><path d="M100 770 C160 680 280 628 384 650 C444 662 484 722 508 764 L474 962 C430 1042 300 1082 196 1062 C150 982 104 884 100 770 Z" fill="#74493a"/><ellipse cx="336" cy="700" rx="100" ry="40" fill="#c9a48c" opacity=".7"/><path d="M110 820 C150 780 200 760 220 760 L150 900 Z" fill="#2c4656"/><path d="M150 1010 C260 1084 400 1042 484 1000 L528 1186 C470 1290 300 1280 210 1150 Z" fill="#2c1c1a"/><path d="M372 944 L486 918 L494 1004 L356 1014 Z" fill="#0e1a24"/><path d="M446 1004 L560 958 L604 1102 L500 1156 Z" fill="#2a4a5c"/><path d="M498 944 C540 858 660 828 732 870 C802 920 812 1022 782 1082 C722 1122 640 1112 590 1082 C560 1042 520 1002 498 944 Z" fill="#a8222a"/><path d="M596 960 L726 930 L742 1010 L620 1040 Z" fill="#4a6880" opacity=".85"/><ellipse cx="640" cy="880" rx="54" ry="20" fill="#f6d4d2" transform="rotate(-22 640 880)"/><path d="M1036 504 C1060 420 1180 380 1282 420 C1334 450 1344 560 1334 650 L1262 604 C1240 542 1180 502 1100 492 Z" fill="#40312b"/><path d="M1038 502 C1100 470 1200 500 1252 560 L1262 702 C1232 762 1160 792 1100 772 L1082 722 L1040 692 C1030 660 1052 640 1040 600 Z" fill="#7a4c3c"/><ellipse cx="1084" cy="640" rx="28" ry="66" fill="#c08a74" opacity=".5"/><ellipse cx="1254" cy="590" rx="30" ry="54" fill="#553730"/><path d="M1236 824 C1280 800 1322 800 1344 822 L1344 966 L1262 952 Z" fill="#d2c7c2"/><path d="M1038 1042 C1060 960 1160 920 1242 950 C1292 980 1302 1062 1262 1142 C1200 1222 1100 1222 1050 1162 Z" fill="#a62129"/><ellipse cx="1176" cy="972" rx="62" ry="28" fill="#f6dcdc"/><ellipse cx="1004" cy="1182" rx="58" ry="104" fill="#951d25" transform="rotate(14 1004 1182)"/><ellipse cx="976" cy="1172" rx="13" ry="42" fill="#f2c6c6" transform="rotate(10 976 1172)"/></g><circle cx="719" cy="718" r="640" fill="url(#pvg)"/></g></g>
</svg>
</div></body></html>
